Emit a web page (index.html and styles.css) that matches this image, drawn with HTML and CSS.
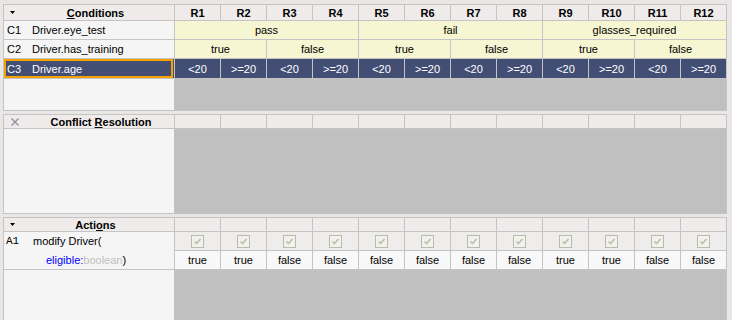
FILE: index.html
```html
<!DOCTYPE html>
<html>
<head>
<meta charset="utf-8">
<link rel="stylesheet" href="styles.css">
</head>
<body>
<div class="page">
  <section class="dt cond">
    <div class="c hd lh"><svg class="tri" width="5" height="3" viewBox="0 0 5 3"><polygon points="0,0 5,0 2.5,3" fill="#000"/></svg><span class="ttl"><u>C</u>onditions</span></div>
    <div class="c hd">R1</div><div class="c hd">R2</div><div class="c hd">R3</div><div class="c hd">R4</div>
    <div class="c hd">R5</div><div class="c hd">R6</div><div class="c hd">R7</div><div class="c hd">R8</div>
    <div class="c hd">R9</div><div class="c hd">R10</div><div class="c hd">R11</div><div class="c hd">R12</div>

    <div class="c lab"><span class="code">C1</span>Driver.eye_test</div>
    <div class="c yel sp4">pass</div><div class="c yel sp4">fail</div><div class="c yel sp4">glasses_required</div>

    <div class="c lab"><span class="code">C2</span>Driver.has_training</div>
    <div class="c yel sp2">true</div><div class="c yel sp2">false</div>
    <div class="c yel sp2">true</div><div class="c yel sp2">false</div>
    <div class="c yel sp2">true</div><div class="c yel sp2">false</div>

    <div class="c sel lsel"><div class="selbox"><span class="code">C3</span>Driver.age</div></div>
    <div class="c sel">&lt;20</div><div class="c sel">&gt;=20</div><div class="c sel">&lt;20</div><div class="c sel">&gt;=20</div>
    <div class="c sel">&lt;20</div><div class="c sel">&gt;=20</div><div class="c sel">&lt;20</div><div class="c sel">&gt;=20</div>
    <div class="c sel">&lt;20</div><div class="c sel">&gt;=20</div><div class="c sel">&lt;20</div><div class="c sel">&gt;=20</div>

    <div class="fill-l"></div><div class="fill-g"></div>
  </section>

  <section class="dt conf">
    <div class="c hd lh"><svg class="x" width="8" height="8" viewBox="0 0 8 8"><path d="M0.5 0.5 L7.5 7.5 M7.5 0.5 L0.5 7.5" stroke="#8c8c9c" stroke-width="1.2" fill="none"/></svg><span class="ttl ttl-conf">Conflict <u>R</u>esolution</span></div>
    <div class="c hd"></div><div class="c hd"></div><div class="c hd"></div><div class="c hd"></div>
    <div class="c hd"></div><div class="c hd"></div><div class="c hd"></div><div class="c hd"></div>
    <div class="c hd"></div><div class="c hd"></div><div class="c hd"></div><div class="c hd"></div>
    <div class="fill-l"></div><div class="fill-g"></div>
  </section>

  <section class="dt act">
    <div class="c hd lh"><svg class="tri" width="5" height="3" viewBox="0 0 5 3"><polygon points="0,0 5,0 2.5,3" fill="#000"/></svg><span class="ttl">Acti<u>o</u>ns</span></div>
    <div class="c hd"></div><div class="c hd"></div><div class="c hd"></div><div class="c hd"></div>
    <div class="c hd"></div><div class="c hd"></div><div class="c hd"></div><div class="c hd"></div>
    <div class="c hd"></div><div class="c hd"></div><div class="c hd"></div><div class="c hd"></div>

    <div class="alab">
      <div class="aline1"><span class="acode">A1</span>modify Driver(</div>
      <div class="aline2"><span class="kw">eligible:</span><span class="ty">boolean</span>)</div>
    </div>
    <div class="c cb"><svg width="13" height="13" viewBox="0 0 13 13"><rect x="0.5" y="0.5" width="12" height="12" fill="#f2f2ec" stroke="#bbbbad"/><path d="M3.5 6.5 L5.5 8.5 L9.5 4" stroke="#bebeb2" stroke-width="1.7" fill="none"/></svg></div>
    <div class="c cb"><svg width="13" height="13" viewBox="0 0 13 13"><rect x="0.5" y="0.5" width="12" height="12" fill="#f2f2ec" stroke="#bbbbad"/><path d="M3.5 6.5 L5.5 8.5 L9.5 4" stroke="#bebeb2" stroke-width="1.7" fill="none"/></svg></div>
    <div class="c cb"><svg width="13" height="13" viewBox="0 0 13 13"><rect x="0.5" y="0.5" width="12" height="12" fill="#f2f2ec" stroke="#bbbbad"/><path d="M3.5 6.5 L5.5 8.5 L9.5 4" stroke="#bebeb2" stroke-width="1.7" fill="none"/></svg></div>
    <div class="c cb"><svg width="13" height="13" viewBox="0 0 13 13"><rect x="0.5" y="0.5" width="12" height="12" fill="#f2f2ec" stroke="#bbbbad"/><path d="M3.5 6.5 L5.5 8.5 L9.5 4" stroke="#bebeb2" stroke-width="1.7" fill="none"/></svg></div>
    <div class="c cb"><svg width="13" height="13" viewBox="0 0 13 13"><rect x="0.5" y="0.5" width="12" height="12" fill="#f2f2ec" stroke="#bbbbad"/><path d="M3.5 6.5 L5.5 8.5 L9.5 4" stroke="#bebeb2" stroke-width="1.7" fill="none"/></svg></div>
    <div class="c cb"><svg width="13" height="13" viewBox="0 0 13 13"><rect x="0.5" y="0.5" width="12" height="12" fill="#f2f2ec" stroke="#bbbbad"/><path d="M3.5 6.5 L5.5 8.5 L9.5 4" stroke="#bebeb2" stroke-width="1.7" fill="none"/></svg></div>
    <div class="c cb"><svg width="13" height="13" viewBox="0 0 13 13"><rect x="0.5" y="0.5" width="12" height="12" fill="#f2f2ec" stroke="#bbbbad"/><path d="M3.5 6.5 L5.5 8.5 L9.5 4" stroke="#bebeb2" stroke-width="1.7" fill="none"/></svg></div>
    <div class="c cb"><svg width="13" height="13" viewBox="0 0 13 13"><rect x="0.5" y="0.5" width="12" height="12" fill="#f2f2ec" stroke="#bbbbad"/><path d="M3.5 6.5 L5.5 8.5 L9.5 4" stroke="#bebeb2" stroke-width="1.7" fill="none"/></svg></div>
    <div class="c cb"><svg width="13" height="13" viewBox="0 0 13 13"><rect x="0.5" y="0.5" width="12" height="12" fill="#f2f2ec" stroke="#bbbbad"/><path d="M3.5 6.5 L5.5 8.5 L9.5 4" stroke="#bebeb2" stroke-width="1.7" fill="none"/></svg></div>
    <div class="c cb"><svg width="13" height="13" viewBox="0 0 13 13"><rect x="0.5" y="0.5" width="12" height="12" fill="#f2f2ec" stroke="#bbbbad"/><path d="M3.5 6.5 L5.5 8.5 L9.5 4" stroke="#bebeb2" stroke-width="1.7" fill="none"/></svg></div>
    <div class="c cb"><svg width="13" height="13" viewBox="0 0 13 13"><rect x="0.5" y="0.5" width="12" height="12" fill="#f2f2ec" stroke="#bbbbad"/><path d="M3.5 6.5 L5.5 8.5 L9.5 4" stroke="#bebeb2" stroke-width="1.7" fill="none"/></svg></div>
    <div class="c cb"><svg width="13" height="13" viewBox="0 0 13 13"><rect x="0.5" y="0.5" width="12" height="12" fill="#f2f2ec" stroke="#bbbbad"/><path d="M3.5 6.5 L5.5 8.5 L9.5 4" stroke="#bebeb2" stroke-width="1.7" fill="none"/></svg></div>

    <div class="c val">true</div><div class="c val">true</div><div class="c val">false</div><div class="c val">false</div>
    <div class="c val">false</div><div class="c val">false</div><div class="c val">false</div><div class="c val">false</div>
    <div class="c val">true</div><div class="c val">true</div><div class="c val">false</div><div class="c val">false</div>

    <div class="fill-l"></div><div class="fill-g"></div>
  </section>
</div>
</body>
</html>
```

FILE: styles.css
```css
html, body {
  margin: 0;
  padding: 0;
}
body {
  width: 732px;
  height: 320px;
  overflow: hidden;
  background: #e9e6e6;
  font-family: "Liberation Sans", Arial, sans-serif;
  font-size: 11px;
  color: #000;
}
.page {
  box-sizing: border-box;
  padding: 4px 0 0 3px;
  display: flex;
  flex-direction: column;
  gap: 3px;
}
.dt {
  display: grid;
  grid-template-columns: 170px repeat(12, 45px);
  gap: 1px;
  padding: 1px;
  background: #c4c4c4;
  width: max-content;
}
.cond { grid-template-rows: 15px 18px 18px 19px 31px; }
.conf { grid-template-rows: 13px 84px; }
.act  { grid-template-rows: 13px 18px 18px 60px; }

.c {
  display: flex;
  align-items: center;
  justify-content: center;
  white-space: nowrap;
  overflow: hidden;
}
.hd {
  background: #eeebea;
  font-weight: bold;
}
.lh {
  justify-content: flex-start;
  padding-left: 6px;
}
.tri { flex: none; }
.x { flex: none; margin-left: 1px; }
.ttl {
  flex: 1;
  text-align: center;
  margin-left: 2px;
}
.ttl-conf { padding-left: 7px; }

.lab {
  background: #f5f5f5;
  justify-content: flex-start;
  padding-left: 3px;
}
.code {
  display: inline-block;
  width: 25px;
}
.yel { background: #f6f6d2; }
.sp4 { grid-column: span 4; }
.sp2 { grid-column: span 2; }

.sel {
  background: #434e75;
  color: #fff;
}
.lsel {
  justify-content: flex-start;
  align-items: stretch;
  padding-right: 1px;
}
.selbox {
  flex: 1;
  display: flex;
  align-items: center;
  border: 2px solid #f5a200;
  padding-left: 1px;
}

.fill-l { background: #f5f5f5; }
.fill-g {
  background: #c0c0c0;
  grid-column: 2 / -1;
}

.alab {
  grid-row: span 2;
  background: #f5f5f5;
  padding-left: 2px;
  white-space: nowrap;
}
.aline1 {
  height: 18px;
  display: flex;
  align-items: center;
}
.aline2 {
  height: 19px;
  display: flex;
  align-items: center;
  padding-left: 40px;
}
.acode {
  display: inline-block;
  width: 27px;
  font-family: "Liberation Mono", "Courier New", monospace;
  font-size: 11px;
}
.kw { color: #0000ff; }
.ty { color: #c0c0c0; }
.cb { background: #efedeb; }
.val { background: #f8f8f8; }
```
